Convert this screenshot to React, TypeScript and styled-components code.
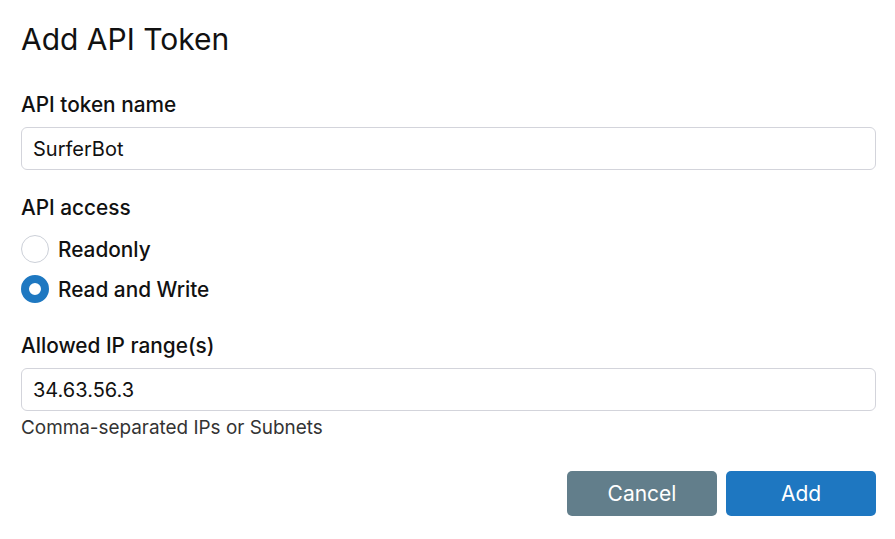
import React, { useState } from 'react';
import styled, { createGlobalStyle } from 'styled-components';

const GlobalStyle = createGlobalStyle`
  html,
  body {
    margin: 0;
    padding: 0;
    background: #ffffff;
    font-family: Inter, "Noto Sans", sans-serif;
    color: #111111;
  }
`;

const Dialog = styled.form`
  display: flex;
  flex-direction: column;
  padding: 21px 19px 0 21px;
  box-sizing: border-box;
  width: 895px;
  height: 539px;
`;

const Title = styled.h2`
  margin: 0 0 35px;
  font-size: 30px;
  font-weight: 400;
  line-height: 36px;
  color: #111111;
`;

const Field = styled.div`
  display: flex;
  flex-direction: column;
`;

const Label = styled.label`
  font-size: 20.8px;
  font-weight: 500;
  line-height: 25px;
  margin-bottom: 10px;
  color: #111111;
`;

const TextInput = styled.input`
  box-sizing: border-box;
  height: 43px;
  width: 100%;
  padding: 0 11px;
  border: 1px solid #d3d4db;
  border-radius: 6px;
  font-family: inherit;
  font-size: 20px;
  color: #111111;
  outline: none;
`;

const Help = styled.div`
  margin-top: 5px;
  font-size: 18.9px;
  line-height: 23px;
  color: #333333;
`;

const RadioGroup = styled.div`
  display: flex;
  flex-direction: column;
  gap: 12px;
  margin-top: 5px;
  margin-bottom: 30px;
`;

const RadioRow = styled.label`
  display: flex;
  align-items: center;
  gap: 9px;
  height: 28px;
  font-size: 20.8px;
  font-weight: 500;
  cursor: pointer;
`;

const RadioDot = styled.span<{ $checked: boolean }>`
  box-sizing: border-box;
  width: 28px;
  height: 28px;
  border-radius: 50%;
  background: #ffffff;
  border: ${(p) => (p.$checked ? '8px solid #1e78c1' : '1px solid #ccd0d8')};
`;

const Actions = styled.div`
  display: flex;
  justify-content: flex-end;
  gap: 9px;
  margin-top: 32px;
`;

const Button = styled.button<{ $primary?: boolean }>`
  width: 150px;
  height: 45px;
  border: none;
  border-radius: 5px;
  font-family: inherit;
  font-size: 21px;
  color: #ffffff;
  background: ${(p) => (p.$primary ? '#1e77c1' : '#627e8b')};
  cursor: pointer;
`;

const Spacer = styled.div`
  height: 25px;
`;

export default function App() {
  const [access, setAccess] = useState<'ro' | 'rw'>('rw');

  return (
    <Dialog onSubmit={(e) => e.preventDefault()}>
      <GlobalStyle />
      <Title>Add API Token</Title>
      <Field>
        <Label>API token name</Label>
        <TextInput defaultValue="SurferBot" />
      </Field>
      <Spacer />
      <Field>
        <Label>API access</Label>
        <RadioGroup>
          <RadioRow onClick={() => setAccess('ro')}>
            <RadioDot $checked={access === 'ro'} />
            Readonly
          </RadioRow>
          <RadioRow onClick={() => setAccess('rw')}>
            <RadioDot $checked={access === 'rw'} />
            Read and Write
          </RadioRow>
        </RadioGroup>
      </Field>
      <Field>
        <Label>Allowed IP range(s)</Label>
        <TextInput defaultValue="34.63.56.3" />
        <Help>Comma-separated IPs or Subnets</Help>
      </Field>
      <Actions>
        <Button type="button">Cancel</Button>
        <Button type="submit" $primary>
          Add
        </Button>
      </Actions>
    </Dialog>
  );
}
